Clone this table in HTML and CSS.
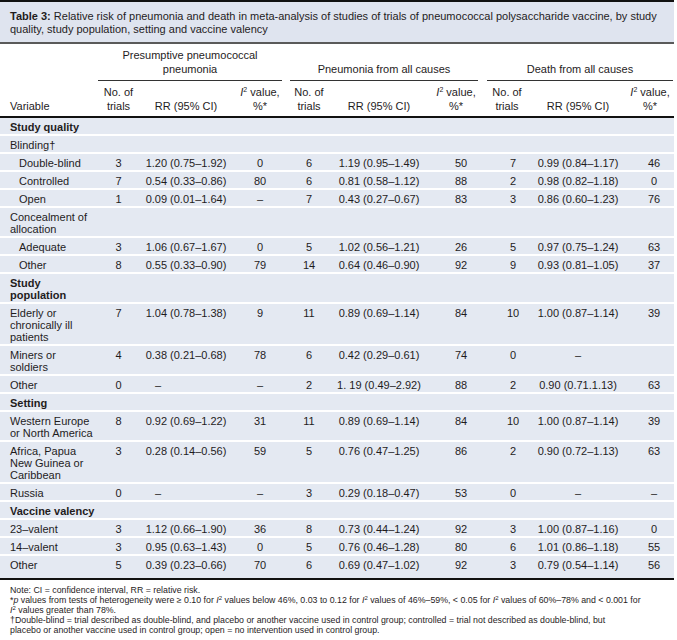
FILE: index.html
```html
<!DOCTYPE html>
<html>
<head>
<meta charset="utf-8">
<title>Table 3</title>
<link rel="stylesheet" href="styles.css">
</head>
<body>
<div class="tbl">
  <div class="title"><b>Table 3:</b> Relative risk of pneumonia and death in meta-analysis of studies of trials of pneumococcal polysaccharide vaccine, by study<br>quality, study population, setting and vaccine valency</div>
  <table>
    <colgroup>
      <col class="c1"><col class="c2"><col class="c3"><col class="c4"><col class="c5"><col class="c6"><col class="c7"><col class="c8"><col class="c9"><col class="c10">
    </colgroup>
    <thead>
      <tr class="h1">
        <th></th>
        <th colspan="3"><div class="grp g1">Presumptive pneumococcal<br>pneumonia</div></th>
        <th colspan="3"><div class="grp g2">Pneumonia from all causes</div></th>
        <th colspan="3"><div class="grp g3">Death from all causes</div></th>
      </tr>
      <tr class="h2">
        <th class="var">Variable</th>
        <th>No. of<br>trials</th>
        <th>RR (95% CI)</th>
        <th><i>I</i><sup>2</sup> value,<br>%*</th>
        <th>No. of<br>trials</th>
        <th>RR (95% CI)</th>
        <th><i>I</i><sup>2</sup> value,<br>%*</th>
        <th>No. of<br>trials</th>
        <th>RR (95% CI)</th>
        <th><i>I</i><sup>2</sup> value,<br>%*</th>
      </tr>
    </thead>
    <tbody>
      <tr class="sec"><td class="lbl" colspan="10">Study quality</td></tr>
      <tr><td class="lbl" colspan="10">Blinding†</td></tr>
      <tr><td class="lbl sub">Double-blind</td><td>3</td><td>1.20 (0.75–1.92)</td><td>0</td><td>6</td><td>1.19 (0.95–1.49)</td><td>50</td><td>7</td><td>0.99 (0.84–1.17)</td><td>46</td></tr>
      <tr><td class="lbl sub">Controlled</td><td>7</td><td>0.54 (0.33–0.86)</td><td>80</td><td>6</td><td>0.81 (0.58–1.12)</td><td>88</td><td>2</td><td>0.98 (0.82–1.18)</td><td>0</td></tr>
      <tr><td class="lbl sub">Open</td><td>1</td><td>0.09 (0.01–1.64)</td><td>–</td><td>7</td><td>0.43 (0.27–0.67)</td><td>83</td><td>3</td><td>0.86 (0.60–1.23)</td><td>76</td></tr>
      <tr><td class="lbl" colspan="10">Concealment of<br>allocation</td></tr>
      <tr><td class="lbl sub">Adequate</td><td>3</td><td>1.06 (0.67–1.67)</td><td>0</td><td>5</td><td>1.02 (0.56–1.21)</td><td>26</td><td>5</td><td>0.97 (0.75–1.24)</td><td>63</td></tr>
      <tr><td class="lbl sub">Other</td><td>8</td><td>0.55 (0.33–0.90)</td><td>79</td><td>14</td><td>0.64 (0.46–0.90)</td><td>92</td><td>9</td><td>0.93 (0.81–1.05)</td><td>37</td></tr>
      <tr class="sec"><td class="lbl" colspan="10">Study<br>population</td></tr>
      <tr><td class="lbl">Elderly or<br>chronically ill<br>patients</td><td>7</td><td>1.04 (0.78–1.38)</td><td>9</td><td>11</td><td>0.89 (0.69–1.14)</td><td>84</td><td>10</td><td>1.00 (0.87–1.14)</td><td>39</td></tr>
      <tr><td class="lbl">Miners or<br>soldiers</td><td>4</td><td>0.38 (0.21–0.68)</td><td>78</td><td>6</td><td>0.42 (0.29–0.61)</td><td>74</td><td>0</td><td>–</td><td></td></tr>
      <tr><td class="lbl">Other</td><td>0</td><td class="dash">–</td><td>–</td><td>2</td><td>1. 19 (0.49–2.92)</td><td>88</td><td>2</td><td>0.90 (0.71.1.13)</td><td>63</td></tr>
      <tr class="sec"><td class="lbl" colspan="10">Setting</td></tr>
      <tr><td class="lbl">Western Europe<br>or North America</td><td>8</td><td>0.92 (0.69–1.22)</td><td>31</td><td>11</td><td>0.89 (0.69–1.14)</td><td>84</td><td>10</td><td>1.00 (0.87–1.14)</td><td>39</td></tr>
      <tr><td class="lbl">Africa, Papua<br>New Guinea or<br>Caribbean</td><td>3</td><td>0.28 (0.14–0.56)</td><td>59</td><td>5</td><td>0.76 (0.47–1.25)</td><td>86</td><td>2</td><td>0.90 (0.72–1.13)</td><td>63</td></tr>
      <tr><td class="lbl">Russia</td><td>0</td><td class="dash">–</td><td>–</td><td>3</td><td>0.29 (0.18–0.47)</td><td>53</td><td>0</td><td>–</td><td>–</td></tr>
      <tr class="sec"><td class="lbl" colspan="10">Vaccine valency</td></tr>
      <tr><td class="lbl">23–valent</td><td>3</td><td>1.12 (0.66–1.90)</td><td>36</td><td>8</td><td>0.73 (0.44–1.24)</td><td>92</td><td>3</td><td>1.00 (0.87–1.16)</td><td>0</td></tr>
      <tr><td class="lbl">14–valent</td><td>3</td><td>0.95 (0.63–1.43)</td><td>0</td><td>5</td><td>0.76 (0.46–1.28)</td><td>80</td><td>6</td><td>1.01 (0.86–1.18)</td><td>55</td></tr>
      <tr class="last"><td class="lbl">Other</td><td>5</td><td>0.39 (0.23–0.66)</td><td>70</td><td>6</td><td>0.69 (0.47–1.02)</td><td>92</td><td>3</td><td>0.79 (0.54–1.14)</td><td>56</td></tr>
    </tbody>
  </table>
  <div class="notes">
    <div>Note: CI = confidence interval, RR = relative risk.</div>
    <div>*<i>p</i> values from tests of heterogeneity were ≥ 0.10 for <i>I</i><sup>2</sup> values below 46%, 0.03 to 0.12 for <i>I</i><sup>2</sup> values of 46%–59%, &lt; 0.05 for <i>I</i><sup>2</sup> values of 60%–78% and &lt; 0.001 for<br><i>I</i><sup>2</sup> values greater than 78%.</div>
    <div>†Double-blind = trial described as double-blind, and placebo or another vaccine used in control group; controlled = trial not described as double-blind, but<br>placebo or another vaccine used in control group; open = no intervention used in control group.</div>
  </div>
</div>
</body>
</html>
```

FILE: styles.css
```css
* { box-sizing: border-box; }

body {
  margin: 0;
  background: #ffffff;
  font-family: "Liberation Sans", Arial, sans-serif;
  font-size: 11px;
  color: #1f1c1d;
}

.tbl {
  width: 674px;
  border-top: 2px solid #111;
}

.title {
  background: #dfe4ef;
  padding: 8px 10px 6px;
  line-height: 13px;
  border-bottom: 2px solid #5a5a5a;
  white-space: nowrap;
}

table {
  width: 674px;
  border-collapse: collapse;
  table-layout: fixed;
}

.c1 { width: 97px; }
.c2 { width: 43px; }
.c3 { width: 92px; }
.c4 { width: 56px; }
.c5 { width: 42px; }
.c6 { width: 98px; }
.c7 { width: 56px; }
.c8 { width: 46px; }
.c9 { width: 96px; }
.c10 { width: 48px; }

th {
  font-weight: normal;
  vertical-align: bottom;
  text-align: center;
  padding: 0;
  line-height: 14px;
  white-space: nowrap;
}

.h1 th { padding-top: 4px; }

.grp {
  border-bottom: 1px solid #333;
  padding-bottom: 4px;
}
.g1 { margin: 0 6px 0 1px; }
.g2 { margin: 0 6px 0 2px; }
.g3 { margin: 0 1px 0 3px; }

.h2 th {
  padding: 4px 0 3px;
  border-bottom: 2px solid #111;
}
.h2 th.var {
  text-align: left;
  padding-left: 10px;
}

td {
  background: #e4e9f2;
  border-bottom: 2px solid #ffffff;
  padding: 3px 0 1px;
  line-height: 12px;
  text-align: center;
  vertical-align: top;
  white-space: nowrap;
}

td:nth-child(7) { padding-left: 10px; }
td:nth-child(8) { padding-left: 12px; }
td:nth-child(10) { padding-left: 8px; }

td.lbl { text-align: left; padding-left: 10px; }
td.sub { padding-left: 19px; }
td.dash { text-align: left; padding-left: 15px; }

tr.sec td { font-weight: bold; }

tr.last td {
  padding-bottom: 7px;
  border-bottom: 2px solid #111;
}

.notes {
  font-size: 8.8px;
  line-height: 10px;
  padding: 5px 10px 0;
  white-space: nowrap;
}

sup {
  font-size: 7px;
  line-height: 0;
  vertical-align: 4px;
}

.notes sup { font-size: 6px; vertical-align: 3px; }
```
